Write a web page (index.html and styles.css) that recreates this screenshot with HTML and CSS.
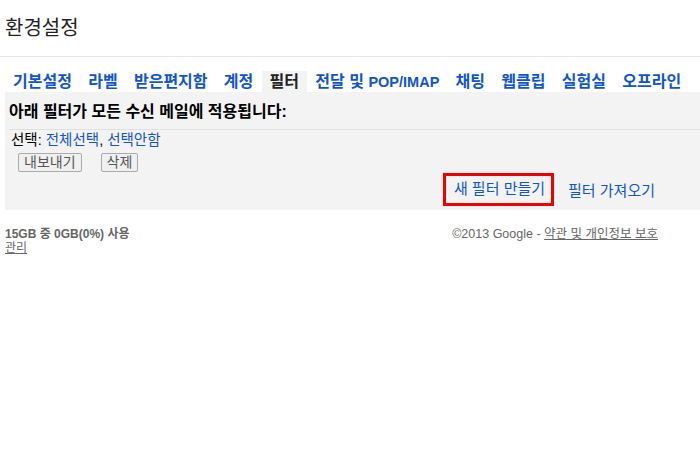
FILE: index.html
```html
<!DOCTYPE html>
<html lang="ko">
  <head>
    <meta charset="UTF-8" />
    <meta name="viewport" content="width=device-width, initial-scale=1.0" />
    <title>환경설정</title>

    <link rel="stylesheet" href="styles.css">
  </head>
  <body>
    <div class="title">환경설정</div>

    <div class="tabs">
      <a class="tab">기본설정</a>
      <a class="tab">라벨</a>
      <a class="tab">받은편지함</a>
      <a class="tab">계정</a>
      <a class="tab active">필터</a>
      <a class="tab">전달 및 <span class="latin">POP/IMAP</span></a>
      <a class="tab">채팅</a>
      <a class="tab">웹클립</a>
      <a class="tab">실험실</a>
      <a class="tab">오프라인</a>
    </div>

    <div class="panel">
      <div class="heading">아래 필터가 모든 수신 메일에 적용됩니다:</div>
      <div class="select">선택: <a>전체선택</a>, <a>선택안함</a></div>
      <div class="buttons">
        <button>내보내기</button>
        <button>삭제</button>
      </div>
      <div class="actions">
        <a class="new-filter">새 필터 만들기</a>
        <a>필터 가져오기</a>
      </div>
    </div>

    <div class="footer">
      <div class="usage">
        <b>15GB 중 0GB(0%) 사용</b>
        <a>관리</a>
      </div>
      <div class="copy">©2013 Google - <a>약관 및 개인정보 보호</a></div>
    </div>
  </body>
</html>
```

FILE: styles.css
```css
* {
  margin: 0;
  padding: 0;
  box-sizing: border-box;
}

body {
  font-family: 'Liberation Sans', 'Noto Sans CJK KR', Arial, sans-serif;
  background-color: #fff;
  color: #222;
}

a {
  color: #15c;
  cursor: pointer;
}

.title {
  height: 57px;
  padding-left: 5px;
  font-size: 20px;
  line-height: 56px;
  border-bottom: 1px solid #e5e5e5;
}

.tabs {
  display: flex;
  margin-top: 14px;
  padding-left: 5px;

  & .tab {
    padding: 0 8.3px 0 8px;
    height: 21px;
    line-height: 21px;
    font-size: 16px;
    font-weight: bold;
    color: #15c;

    &.active {
      background-color: #f3f3f3;
      color: #222;
    }

    & .latin {
      font-size: 14.5px;
    }
  }
}

.panel {
  margin-left: 5px;
  padding-bottom: 4px;
  background-color: #f3f3f3;
}

.heading {
  margin-left: 4px;
  padding: 10px 0 7px;
  font-size: 16px;
  font-weight: bold;
  line-height: 20px;
  color: #000;
  border-bottom: 1px solid #e0e0e0;
}

.select {
  padding-left: 6px;
  font-size: 14.5px;
  line-height: 20px;
  color: #000;
}

.buttons {
  display: flex;
  gap: 19px;
  margin-top: 3px;
  padding-left: 13px;

  & button {
    height: 19px;
    padding: 0 5px;
    font-family: inherit;
    font-size: 14px;
    line-height: 17px;
    color: #555;
    background-color: #f0f0f0;
    border: 1px solid #aaa;
    border-radius: 2px;
  }
}

.actions {
  display: flex;
  justify-content: flex-end;
  align-items: center;
  gap: 14px;
  margin-top: 1px;
  padding-right: 45px;
  font-size: 15px;

  & .new-filter {
    padding: 3px 6px 4px 8px;
    line-height: 20px;
    border: 3px solid #e00;
  }
}

.footer {
  display: flex;
  justify-content: space-between;
  padding: 17px 42px 0 5px;
  font-size: 12px;
  line-height: 14px;
  color: #666;

  & .usage {
    display: flex;
    flex-direction: column;
  }

  & .copy {
    font-size: 12.5px;
  }

  & a {
    color: #666;
    text-decoration: underline;
  }
}
```
